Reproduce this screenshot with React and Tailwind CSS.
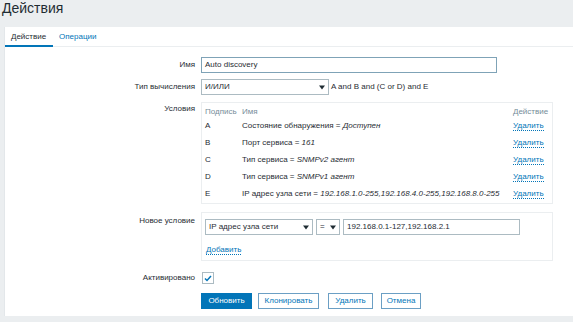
import React from "react";

const Arrow = () => (
  <svg width="6" height="5" viewBox="0 0 6 5" className="shrink-0">
    <path d="M0 0.5 H6 L3 4.5 Z" fill="#1f2c33" />
  </svg>
);

const Link = ({ children }) => (
  <span className="text-[#0275b8] border-b border-dotted border-[#0275b8] leading-[10px]">{children}</span>
);

const rows = [
  ["A", "Состояние обнаружения = ", "Доступен"],
  ["B", "Порт сервиса = ", "161"],
  ["C", "Тип сервиса = ", "SNMPv2 агент"],
  ["D", "Тип сервиса = ", "SNMPv1 агент"],
  ["E", "IP адрес узла сети = ", "192.168.1.0-255,192.168.4.0-255,192.168.8.0-255"],
];

export default function App() {
  return (
    <div
      className="w-[573px] h-[322px] bg-[#ebeef0] overflow-hidden text-[#1f2c33] text-[8px]"
      style={{ fontFamily: '"Liberation Sans", Arial, sans-serif' }}
    >
      <div className="h-[27px] pl-[2px] text-[14px] leading-[17px]">Действия</div>
      <div className="ml-[4px] bg-white h-[289px] border-l border-[#e3e7ea]">
        <div className="h-[20px] flex border-b border-[#ebeef0]">
          <div className="w-[48px] pl-[6px] flex items-center border-b-[2px] border-[#0275b8] h-[20px] pt-[1px]">Действие</div>
          <div className="pl-[6px] flex items-center text-[#0275b8] h-[19px]">Операции</div>
        </div>
        <div className="pt-[10px]">
          <div className="flex items-center">
            <div className="w-[196px] pr-[6px] text-right">Имя</div>
            <div className="w-[296px] h-[16px] border border-[#7fa3b7] flex items-center px-[3px]">Auto discovery</div>
          </div>
          <div className="flex items-center mt-[6px]">
            <div className="w-[196px] pr-[6px] text-right">Тип вычисления</div>
            <div className="w-[128px] h-[16px] border border-[#acbbc2] flex items-center justify-between px-[3px]">
              <span>И/ИЛИ</span>
              <Arrow />
            </div>
            <div className="ml-[2px]">A and B and (C or D) and E</div>
          </div>
          <div className="flex mt-[7px]">
            <div className="w-[196px] pr-[6px] text-right pt-[1px]">Условия</div>
            <div className="w-[352px] h-[102px] border border-[#ebeef0] px-[3px] pt-[3px]">
              <div className="flex h-[11px] items-center text-[#768d99]">
                <div className="w-[37px]">Подпись</div>
                <div className="flex-1">Имя</div>
                <div className="w-[36px] text-right pr-[2px]">Действие</div>
              </div>
              {rows.map(([l, n, v]) => (
                <div key={l} className="flex h-[17px] items-center">
                  <div className="w-[37px]">{l}</div>
                  <div className="flex-1 whitespace-nowrap">
                    {n}
                    <i>{v}</i>
                  </div>
                  <div className="w-[36px]">
                    <Link>Удалить</Link>
                  </div>
                </div>
              ))}
            </div>
          </div>
          <div className="flex mt-[8px]">
            <div className="w-[196px] pr-[6px] text-right pt-[3px]">Новое условие</div>
            <div className="w-[352px] h-[49px] border border-[#ebeef0] px-[3px] pt-[6px]">
              <div className="flex items-center gap-[3px]">
                <div className="w-[108px] h-[16px] border border-[#acbbc2] flex items-center justify-between px-[3px]">
                  <span>IP адрес узла сети</span>
                  <Arrow />
                </div>
                <div className="w-[24px] h-[16px] border border-[#acbbc2] flex items-center justify-between px-[3px]">
                  <span>=</span>
                  <Arrow />
                </div>
                <div className="w-[177px] h-[16px] border border-[#acbbc2] flex items-center px-[3px]">
                  192.168.0.1-127,192.168.2.1
                </div>
              </div>
              <div className="mt-[9px] pl-[1px] h-[11px]">
                <Link>Добавить</Link>
              </div>
            </div>
          </div>
          <div className="flex items-center mt-[11px]">
            <div className="w-[196px] pr-[6px] text-right">Активировано</div>
            <div className="w-[12px] h-[12px] border border-[#acbbc2] flex items-center justify-center ml-[1px]">
              <svg width="8" height="7" viewBox="0 0 8 7">
                <path d="M1 3.5 L3 5.5 L7 1" stroke="#0275b8" strokeWidth="1.5" fill="none" />
              </svg>
            </div>
          </div>
          <div className="flex items-center mt-[9px] pl-[196px]">
            <div className="w-[51px] h-[16px] bg-[#0275b8] text-white flex items-center justify-center">Обновить</div>
            <div className="w-[61px] h-[16px] ml-[6px] border border-[#6b9fc4] text-[#0275b8] flex items-center justify-center">Клонировать</div>
            <div className="w-[45px] h-[16px] ml-[9px] border border-[#6b9fc4] text-[#0275b8] flex items-center justify-center">Удалить</div>
            <div className="w-[40px] h-[16px] ml-[8px] border border-[#6b9fc4] text-[#0275b8] flex items-center justify-center">Отмена</div>
          </div>
        </div>
      </div>
    </div>
  );
}
